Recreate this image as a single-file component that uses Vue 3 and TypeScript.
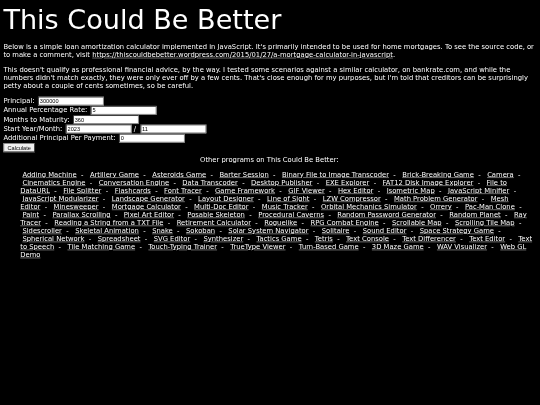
<script setup lang="ts">
const programs: string[] = [
  'Adding Machine','Artillery Game','Asteroids Game','Barter Session','Binary File to Image Transcoder','Brick-Breaking Game','Camera',
  'Cinematics Engine','Conversation Engine','Data Transcoder','Desktop Publisher','EXE Explorer','FAT12 Disk Image Explorer','File to DataURL',
  'File Splitter','Flashcards','Font Tracer','Game Framework','GIF Viewer','Hex Editor','Isometric Map','JavaScript Minifier',
  'JavaScript Modularizer','Landscape Generator','Layout Designer','Line of Sight','LZW Compressor','Math Problem Generator','Mesh Editor',
  'Minesweeper','Mortgage Calculator','Multi-Doc Editor','Music Tracker','Orbital Mechanics Simulator','Orrery','Pac-Man Clone',
  'Paint','Parallax Scrolling','Pixel Art Editor','Posable Skeleton','Procedural Caverns','Random Password Generator','Random Planet','Ray Tracer',
  'Reading a String from a TXT File','Retirement Calculator','Roguelike','RPG Combat Engine','Scrollable Map','Scrolling Tile Map',
  'Sidescroller','Skeletal Animation','Snake','Sokoban','Solar System Navigator','Solitaire','Sound Editor','Space Strategy Game',
  'Spherical Network','Spreadsheet','SVG Editor','Synthesizer','Tactics Game','Tetris','Text Console','Text Differencer','Text Editor','Text to Speech',
  'Tile Matching Game','Touch-Typing Trainer','TrueType Viewer','Turn-Based Game','3D Maze Game','WAV Visualizer','Web GL Demo'
]
</script>

<template>
  <div class="frame">
    <div class="page">
      <h1 class="title">This Could Be Better</h1>
      <p class="para">Below is a simple loan amortization calculator implemented in JavaScript. It's primarily intended to be used for home mortgages. To see the source code, or to make a comment, visit <a href="#">https://thiscouldbebetter.wordpress.com/2015/01/27/a-mortgage-calculator-in-javascript</a>.</p>
      <p class="para">This doesn't qualify as professional financial advice, by the way. I tested some scenarios against a similar calculator, on bankrate.com, and while the numbers didn't match exactly, they were only ever off by a few cents. That's close enough for my purposes, but I'm told that creditors can be surprisingly petty about a couple of cents sometimes, so be careful.</p>
      <form class="form" @submit.prevent>
        <div class="row"><label>Principal:&nbsp; </label><input value="300000" /></div>
        <div class="row"><label>Annual Percentage Rate:&nbsp; </label><input value="5" /></div>
        <div class="row"><label>Months to Maturity:&nbsp; </label><input value="360" /></div>
        <div class="row"><label>Start Year/Month:&nbsp; </label><input value="2023" />&nbsp;/&nbsp; <input value="11" /></div>
        <div class="row"><label>Additional Principal Per Payment:&nbsp; </label><input value="0" /></div>
        <button class="calc" type="button">Calculate</button>
      </form>
      <div class="others">Other programs on This Could Be Better:</div>
      <div class="links">
        <template v-for="(name, i) in programs" :key="name">&nbsp;<a href="#">{{ name }}</a><span v-if="i < programs.length - 1">&nbsp;&nbsp;-&nbsp; </span></template>
      </div>
    </div>
  </div>
</template>

<style>
html, body { margin: 0; background: #000; overflow: hidden; }
</style>

<style scoped>
.frame {
  width: 540px;
  height: 405px;
  overflow: hidden;
  background: #000;
}
.page {
  width: 1280px;
  height: 960px;
  box-sizing: border-box;
  padding: 8px 11px 8px 8px;
  background: #000;
  color: #fff;
  font-family: "DejaVu Sans", sans-serif;
  font-size: 16.1px;
  line-height: 19px;
  overflow: hidden;
  transform: scale(0.421875);
  transform-origin: 0 0;
  filter: blur(0.6px);
}
.title {
  margin: 0 0 19px;
  font-size: 64.2px;
  line-height: 75px;
  font-weight: 400;
}
.para { margin: 0 0 16px; }
.para a, .links a { color: #fff; text-decoration: underline; }
.row { height: 22px; display: block; }
.row label { margin-right: -2px; }
.row input {
  width: 156px;
  height: 21px;
  box-sizing: border-box;
  padding: 1px 2px;
  border: 2px inset #767676;
  background: #fff;
  color: #000;
  font-family: "Liberation Sans", sans-serif;
  font-size: 13.33px;
  outline: none;
  vertical-align: baseline;
}
.calc {
  display: block;
  width: 75px;
  height: 22px;
  padding: 1px 6px;
  border: 2px outset #767676;
  border-radius: 0;
  background: #efefef;
  color: #000;
  font-family: "Liberation Sans", sans-serif;
  font-size: 13.33px;
}
.others { margin-top: 7px; text-align: center; }
.links { margin-top: 18px; padding-left: 40px; }
</style>
